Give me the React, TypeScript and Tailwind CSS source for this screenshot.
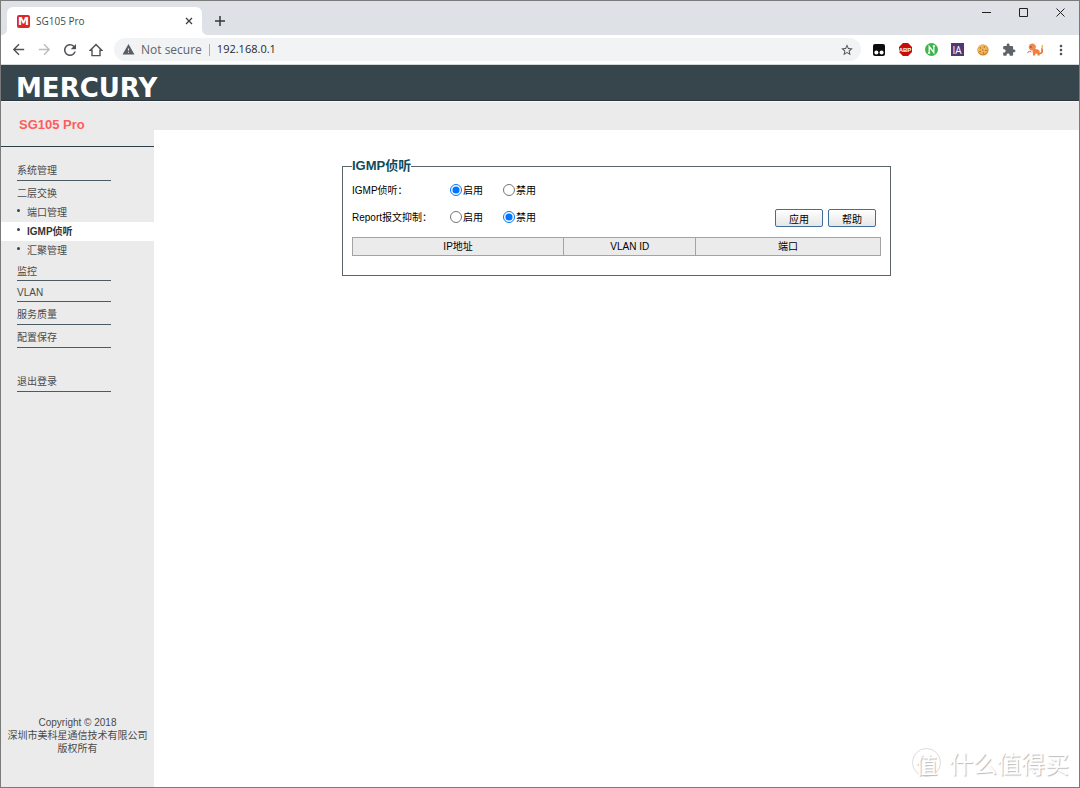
import { useState } from 'react';
import type { ReactNode } from 'react';
import {
  MdArrowBack,
  MdArrowForward,
  MdRefresh,
  MdWarning,
  MdStarBorder,
  MdExtension,
  MdMoreVert,
} from 'react-icons/md';

function Flare({ flip = false }: { flip?: boolean }) {
  return (
    <svg className="w-1.5 h-1.5 shrink-0" viewBox="0 0 6 6" fill="#fff" aria-hidden="true">
      {flip ? <path d="M0 0v6h6C2.500 6 0 3.500 0 0z" /> : <path d="M6 0v6H0c3.500 0 6-2.500 6-6z" />}
    </svg>
  );
}

function IconButton({ label, children }: { label: string; children: ReactNode }) {
  return (
    <button type="button" aria-label={label} className="w-[26px] h-6 shrink-0 flex items-center justify-center">
      {children}
    </button>
  );
}

function TabStrip() {
  return (
    <div className="h-[34px] flex items-end bg-[#dee1e6]">
      <Flare />
      <div className="w-[195px] h-7 flex items-center bg-white rounded-t-md pl-2.5 pr-[7px]">
        <span className="size-[13px] rounded-xs bg-[#e0262c] text-white text-[11px] leading-none font-black font-['DejaVu_Sans'] flex items-center justify-center">
          M
        </span>
        <span className="ml-1.5 flex-1 text-[10px] text-[#45494d]">SG105 Pro</span>
        <button type="button" aria-label="Close tab" className="size-3 flex items-center justify-center">
          <svg className="size-2" viewBox="0 0 8 8" stroke="#3c4043" strokeWidth="1.3">
            <path d="M1 1l6 6M7 1L1 7" />
          </svg>
        </button>
      </div>
      <Flare flip />
      <button type="button" aria-label="New tab" className="w-6 h-7 flex items-center justify-center">
        <svg className="size-2.5" viewBox="0 0 10 10" stroke="#34383c" strokeWidth="1.5">
          <path d="M5 0v10M0 5h10" />
        </svg>
      </button>
      <div className="ml-auto self-start flex h-[23px] text-[#222]">
        <button type="button" aria-label="Minimize" className="w-[37px] flex items-center justify-center">
          <svg className="size-[9px]" viewBox="0 0 9 9" stroke="currentColor">
            <path d="M0 4.500h9" />
          </svg>
        </button>
        <button type="button" aria-label="Maximize" className="w-[37px] flex items-center justify-center">
          <svg className="size-[9px]" viewBox="0 0 9 9" stroke="currentColor" fill="none">
            <path d="M.5.5h8v8h-8z" />
          </svg>
        </button>
        <button type="button" aria-label="Close" className="w-[37px] flex items-center justify-center">
          <svg className="size-[9px]" viewBox="0 0 9 9" stroke="currentColor">
            <path d="M.5.5l8 8M8.500.5l-8 8" />
          </svg>
        </button>
      </div>
    </div>
  );
}

function Toolbar() {
  return (
    <div className="h-[30px] flex items-center bg-white border-b border-[#d5d8db] pl-1 pr-[5px] text-[#4f5357]">
      <IconButton label="Back"><MdArrowBack size={17} /></IconButton>
      <IconButton label="Forward"><MdArrowForward size={17} className="text-[#babcbe]" /></IconButton>
      <IconButton label="Reload"><MdRefresh size={18} /></IconButton>
      <IconButton label="Home">
        <svg className="size-[14px]" viewBox="0 0 14 14" fill="none" stroke="currentColor" strokeWidth="1.4">
          <path d="M3 12.600V7.200H1.400L7 1.600l5.600 5.600H11v5.400z" />
        </svg>
      </IconButton>
      <div className="ml-[5px] h-[23px] flex-1 min-w-0 flex items-center bg-[#f1f3f4] rounded-full pl-2 pr-px text-xs">
        <MdWarning size={13} className="text-[#5a5e62]" />
        <button type="button" className="ml-1.5 text-[#5f6368] whitespace-nowrap">Not secure</button>
        <span className="mx-[7px] w-px h-3 bg-[#a9acb0]" />
        <input
          aria-label="Address"
          defaultValue="192.168.0.1"
          className="flex-1 min-w-0 bg-transparent outline-none text-[11px] text-[#26292c]"
        />
        <IconButton label="Bookmark this page"><MdStarBorder size={14} /></IconButton>
      </div>
      <div className="ml-[5px] flex">
        <IconButton label="Tampermonkey">
          <svg className="size-3" viewBox="0 0 12 12">
            <rect width="12" height="12" rx="2" fill="#0c0c0c" />
            <circle cx="3.400" cy="8.600" r="2" fill="#fff" />
            <circle cx="8.600" cy="8.600" r="2" fill="#fff" />
          </svg>
        </IconButton>
        <IconButton label="Adblock Plus">
          <span className="relative size-[13px] flex items-center justify-center">
            <svg className="absolute inset-0 size-[13px]" viewBox="0 0 13 13" fill="#c70d0c">
              <path d="M3.900 0h5.200L13 3.900v5.200L9.100 13H3.900L0 9.100V3.900z" />
            </svg>
            <span className="relative text-white text-[6px] leading-none font-bold font-['Liberation_Sans']">ABP</span>
          </span>
        </IconButton>
        <IconButton label="N">
          <svg className="size-[13px]" viewBox="0 0 13 13">
            <circle cx="6.500" cy="6.500" r="6.500" fill="#3bb44a" />
            <path d="M4.200 10V3.500L8.800 9.500V3M2.900 10h2.300M7.800 3h2.300" fill="none" stroke="#fff" strokeWidth="1.300" />
          </svg>
        </IconButton>
        <IconButton label="IA">
          <span className="size-[13px] bg-[#4f3878] text-white text-[10px] leading-none font-['Open_Sans'] flex items-center justify-center">
            IA
          </span>
        </IconButton>
        <IconButton label="Cookies">
          <svg className="size-3" viewBox="0 0 12 12">
            <circle cx="6" cy="6" r="5.600" fill="#cf842f" />
            <circle cx="5.600" cy="5.400" r="4.900" fill="#f0b65a" />
            <g fill="#a65f22">
              <circle cx="3.500" cy="4" r=".7" />
              <circle cx="7.300" cy="3" r=".7" />
              <circle cx="5.800" cy="6" r=".7" />
              <circle cx="3" cy="7.500" r=".7" />
              <circle cx="8.900" cy="6.400" r=".7" />
              <circle cx="6.500" cy="9" r=".7" />
            </g>
          </svg>
        </IconButton>
        <IconButton label="Extensions"><MdExtension size={14} className="text-[#5f6368]" /></IconButton>
        <IconButton label="Profile">
          <svg className="w-[17px] h-[13px]" viewBox="0 0 17 13">
            <path d="M10 9c2 1.500 4 1 4.300-1 .2-1.500-.7-2.200.2-3.700 1.300 1.200 1.900 2.700 1.500 4.400-.6 2.500-3.200 3.300-5.500 2.500z" fill="#ee7436" />
            <path d="M5.500 6.500c3-1 6.300-.3 7.200 1.800V12.500h-2.200v-1.800H8.200v1.800H6z" fill="#ef8243" />
            <path d="M1.800 3.800C2.300 1 4.500.1 6.500.7c2 .6 2.900 2.500 2.200 4.400-.8 2-3.200 2.700-5 2.100C2.200 6.700 1.500 5.300 1.800 3.800z" fill="#f08a4b" />
            <path d="M.3 9.800l2-1.500 2 .7" stroke="#d9534a" fill="none" />
            <path d="M15 1.500c1 1 1.500 2 .8 3.300-1 .2-1.700-1-.8-3.300z" fill="#e3b13c" />
            <circle cx="3.900" cy="3.900" r=".7" fill="#5b3023" />
          </svg>
        </IconButton>
        <IconButton label="Menu"><MdMoreVert size={16} /></IconButton>
      </div>
    </div>
  );
}

function MenuLink({ children, className = 'h-[23px]' }: { children: ReactNode; className?: string }) {
  return (
    <a href="#" className={`ml-4 w-[94px] flex items-center border-b border-[#4d5c64] pt-0.5 ${className}`}>
      {children}
    </a>
  );
}

function SubLink({ children, active = false }: { children: ReactNode; active?: boolean }) {
  return (
    <a href="#" className={`h-[19px] pl-4 flex items-center ${active ? 'bg-white font-bold text-[#333]' : ''}`}>
      <span className="w-[10px] pb-1 flex">
        <span className="size-[3px] rounded-full bg-[#37454d]" />
      </span>
      {children}
    </a>
  );
}

function Sidebar() {
  return (
    <aside className="w-[153px] shrink-0 flex flex-col bg-[#ebebeb] text-[10px] text-[#4a4a4a]">
      <h1 className="h-[45px] pl-[18px] pt-px flex items-center border-b border-[#2c4048] text-[13px] font-bold text-[#ff5c5c]">
        SG105 Pro
      </h1>
      <nav className="pt-[11px] flex flex-col">
        <MenuLink>系统管理</MenuLink>
        <a href="#" className="ml-4 h-[22px] pt-0.5 flex items-center">二层交换</a>
        <SubLink>端口管理</SubLink>
        <SubLink active>IGMP侦听</SubLink>
        <SubLink>汇聚管理</SubLink>
        <MenuLink className="h-[21px]">监控</MenuLink>
        <MenuLink className="h-[21px]">VLAN</MenuLink>
        <MenuLink>服务质量</MenuLink>
        <MenuLink>配置保存</MenuLink>
        <MenuLink className="h-[23px] mt-[21px]">退出登录</MenuLink>
      </nav>
      <footer className="mt-auto pb-8 text-center leading-[13px]">
        <p>Copyright © 2018</p>
        <p>深圳市美科星通信技术有限公司</p>
        <p>版权所有</p>
      </footer>
    </aside>
  );
}

interface ToggleProps {
  name: string;
  label: string;
  value: boolean;
  onChange: (value: boolean) => void;
}

function ToggleRow({ name, label, value, onChange }: ToggleProps) {
  return (
    <div role="radiogroup" aria-label={label} className="h-[27px] flex items-center">
      <span className="w-[98px]">{label}</span>
      <label className="w-[53px] flex items-center gap-px">
        <input type="radio" name={name} className="size-3 mb-0.5" checked={value} onChange={() => onChange(true)} />
        启用
      </label>
      <label className="flex items-center gap-px">
        <input type="radio" name={name} className="size-3 mb-0.5" checked={!value} onChange={() => onChange(false)} />
        禁用
      </label>
    </div>
  );
}

function ActionButton({ children }: { children: ReactNode }) {
  return (
    <button
      type="button"
      className="w-12 h-[18px] pt-[3px] flex items-center justify-center rounded-xs border border-[#3f6f9f] bg-linear-to-b from-white to-[#e6e6e6]"
    >
      {children}
    </button>
  );
}

function SnoopingForm() {
  const [snooping, setSnooping] = useState(true);
  const [suppression, setSuppression] = useState(false);

  return (
    <form className="w-full max-w-[549px] mx-auto mt-7 text-[10px] text-black">
      <fieldset className="border border-[#5b6468] px-[9px] pb-[19px]">
        <legend className="text-[13px] leading-4 font-bold text-[#0f4b5c]">IGMP侦听</legend>
        <div className="pt-[3px]">
          <ToggleRow name="snooping" label="IGMP侦听：" value={snooping} onChange={setSnooping} />
          <div className="flex items-center justify-between">
            <ToggleRow name="suppression" label="Report报文抑制：" value={suppression} onChange={setSuppression} />
            <div className="flex gap-[5px] mr-[5px]">
              <ActionButton>应用</ActionButton>
              <ActionButton>帮助</ActionButton>
            </div>
          </div>
        </div>
        <table className="mt-1.5 w-full table-fixed border-collapse">
          <thead>
            <tr className="h-[18px] bg-[#ebebeb] leading-4">
              <th className="w-2/5 border border-[#a3a3a3] font-normal">IP地址</th>
              <th className="w-1/4 border border-[#a3a3a3] font-normal">VLAN ID</th>
              <th className="border border-[#a3a3a3] font-normal">端口</th>
            </tr>
          </thead>
        </table>
      </fieldset>
    </form>
  );
}

export default function App() {
  return (
    <div className="relative min-h-screen flex flex-col border border-[#7a7a7a] bg-white font-['Open_Sans','Noto_Sans_CJK_SC',sans-serif]">
      <TabStrip />
      <Toolbar />
      <div className="flex-1 flex flex-col font-['Liberation_Sans','Noto_Sans_CJK_SC',sans-serif]">
        <header className="h-9 pt-2.5 pl-[15px] flex items-center bg-[#37454d] border-b border-[#2a373e]">
          <span className="font-['DejaVu_Sans'] font-bold text-[26px] leading-none text-white">MERCURY</span>
        </header>
        <div className="flex-1 flex border-t border-[#f7f7f7]">
          <Sidebar />
          <main className="flex-1 min-w-0">
            <div className="h-7 bg-[#ebebeb]" />
            <SnoopingForm />
          </main>
        </div>
      </div>
      <div className="absolute right-2.5 bottom-2.5 flex items-center gap-2 font-['Noto_Sans_CJK_SC',sans-serif] text-white [text-shadow:1px_1px_1px_#bbb]">
        <span className="size-[29px] rounded-full border border-[#dcdcdc] flex items-center justify-center text-[22px] leading-none">
          值
        </span>
        <span className="text-2xl leading-7">什么值得买</span>
      </div>
    </div>
  );
}
